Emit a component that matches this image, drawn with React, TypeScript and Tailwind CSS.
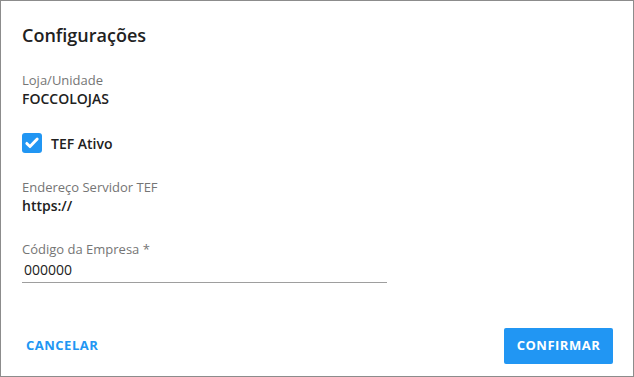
import React from "react";

export default function App() {
  return (
    <div
      className="w-[634px] h-[377px] border border-[#8c8c8c] bg-white flex flex-col pl-[21px] pr-[20px] text-[#212121]"
      style={{ fontFamily: '"Open Sans", "Noto Sans", sans-serif' }}
    >
      <h1 className="mt-[22px] text-[18px] leading-[24px] font-semibold">Configurações</h1>

      <div className="mt-[24px] text-[13px] leading-[18px] text-[#757575]">Loja/Unidade</div>
      <div className="text-[14px] leading-[19px] font-semibold">FOCCOLOJAS</div>

      <label className="mt-[25px] flex items-center gap-[9px] h-[20px]">
        <span className="w-[20px] h-[20px] rounded-[3px] bg-[#2196f3] flex items-center justify-center">
          <svg width="16" height="16" viewBox="0 0 20 20" fill="none">
            <path d="M3.5 10.5l4 4L16.5 5" stroke="white" strokeWidth="3.6" strokeLinecap="round" strokeLinejoin="round" />
          </svg>
        </span>
        <span className="text-[14px] font-semibold">TEF Ativo</span>
      </label>

      <div className="mt-[25px] text-[13px] leading-[18px] text-[#757575]">Endereço Servidor TEF</div>
      <div className="text-[14px] leading-[19px] font-semibold">https://</div>

      <div className="mt-[25px] text-[13px] leading-[18px] text-[#757575]">Código da Empresa *</div>
      <div className="w-[365px] border-b border-[#9e9e9e] pt-[2px] pb-[3px] pl-[2px] text-[14px] leading-[19px]">000000</div>

      <div className="mt-auto mb-[12px] flex items-center justify-between">
        <button className="ml-[4px] text-[13px] font-bold text-[#2196f3] tracking-[0.5px]">CANCELAR</button>
        <button className="w-[109px] h-[36px] rounded-[2px] bg-[#2196f3] text-white text-[13px] font-bold tracking-[0.5px]">
          CONFIRMAR
        </button>
      </div>
    </div>
  );
}
